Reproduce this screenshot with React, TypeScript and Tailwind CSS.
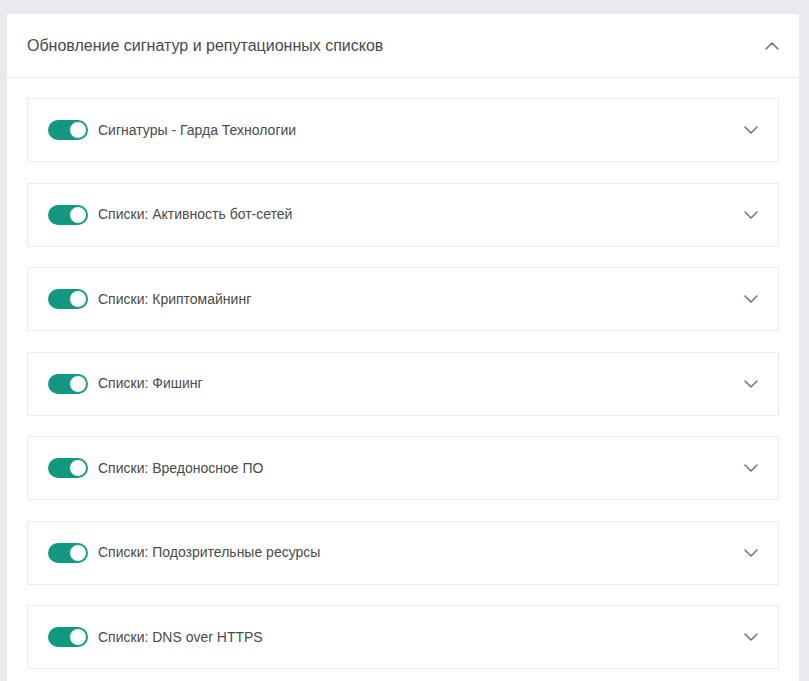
import React from "react";

const items = [
  "Сигнатуры - Гарда Технологии",
  "Списки: Активность бот-сетей",
  "Списки: Криптомайнинг",
  "Списки: Фишинг",
  "Списки: Вредоносное ПО",
  "Списки: Подозрительные ресурсы",
  "Списки: DNS over HTTPS",
];

function Chevron({ up }: { up?: boolean }) {
  return (
    <svg width="14" height="8" viewBox="0 0 14 8" fill="none" className="shrink-0">
      <path
        d={up ? "M1 7 L7 1 L13 7" : "M1 1 L7 7 L13 1"}
        stroke="#6b7280"
        strokeWidth="1.5"
        strokeLinecap="round"
        strokeLinejoin="round"
      />
    </svg>
  );
}

function Toggle() {
  return (
    <div className="w-[40px] h-[20px] rounded-full bg-[#129880] flex items-center justify-end pr-[1px] shrink-0">
      <div className="w-[18px] h-[18px] rounded-full bg-white border border-[#129880]" />
    </div>
  );
}

export default function App() {
  return (
    <div
      className="w-[809px] h-[681px] bg-[#e9eaef] pt-[14px] pl-[7px] pr-[10px] overflow-hidden"
      style={{ fontFamily: "'Liberation Sans', Arial, sans-serif" }}
    >
      <div className="bg-white h-full">
        <div className="h-[64px] flex items-center justify-between pl-[20px] pr-[20px] border-b border-[#ebebeb]">
          <span className="text-[16px] text-[#4a4a4a]">Обновление сигнатур и репутационных списков</span>
          <Chevron up />
        </div>
        <div className="flex flex-col gap-[20.5px] pt-[20px] px-[20px]">
          {items.map((t) => (
            <div
              key={t}
              className="h-[64px] border border-[#ebebeb] flex items-center pl-[20px] pr-[20px] justify-between"
            >
              <div className="flex items-center gap-[10px]">
                <Toggle />
                <span className="text-[14px] text-[#4a4a4a]">{t}</span>
              </div>
              <Chevron />
            </div>
          ))}
        </div>
      </div>
    </div>
  );
}
